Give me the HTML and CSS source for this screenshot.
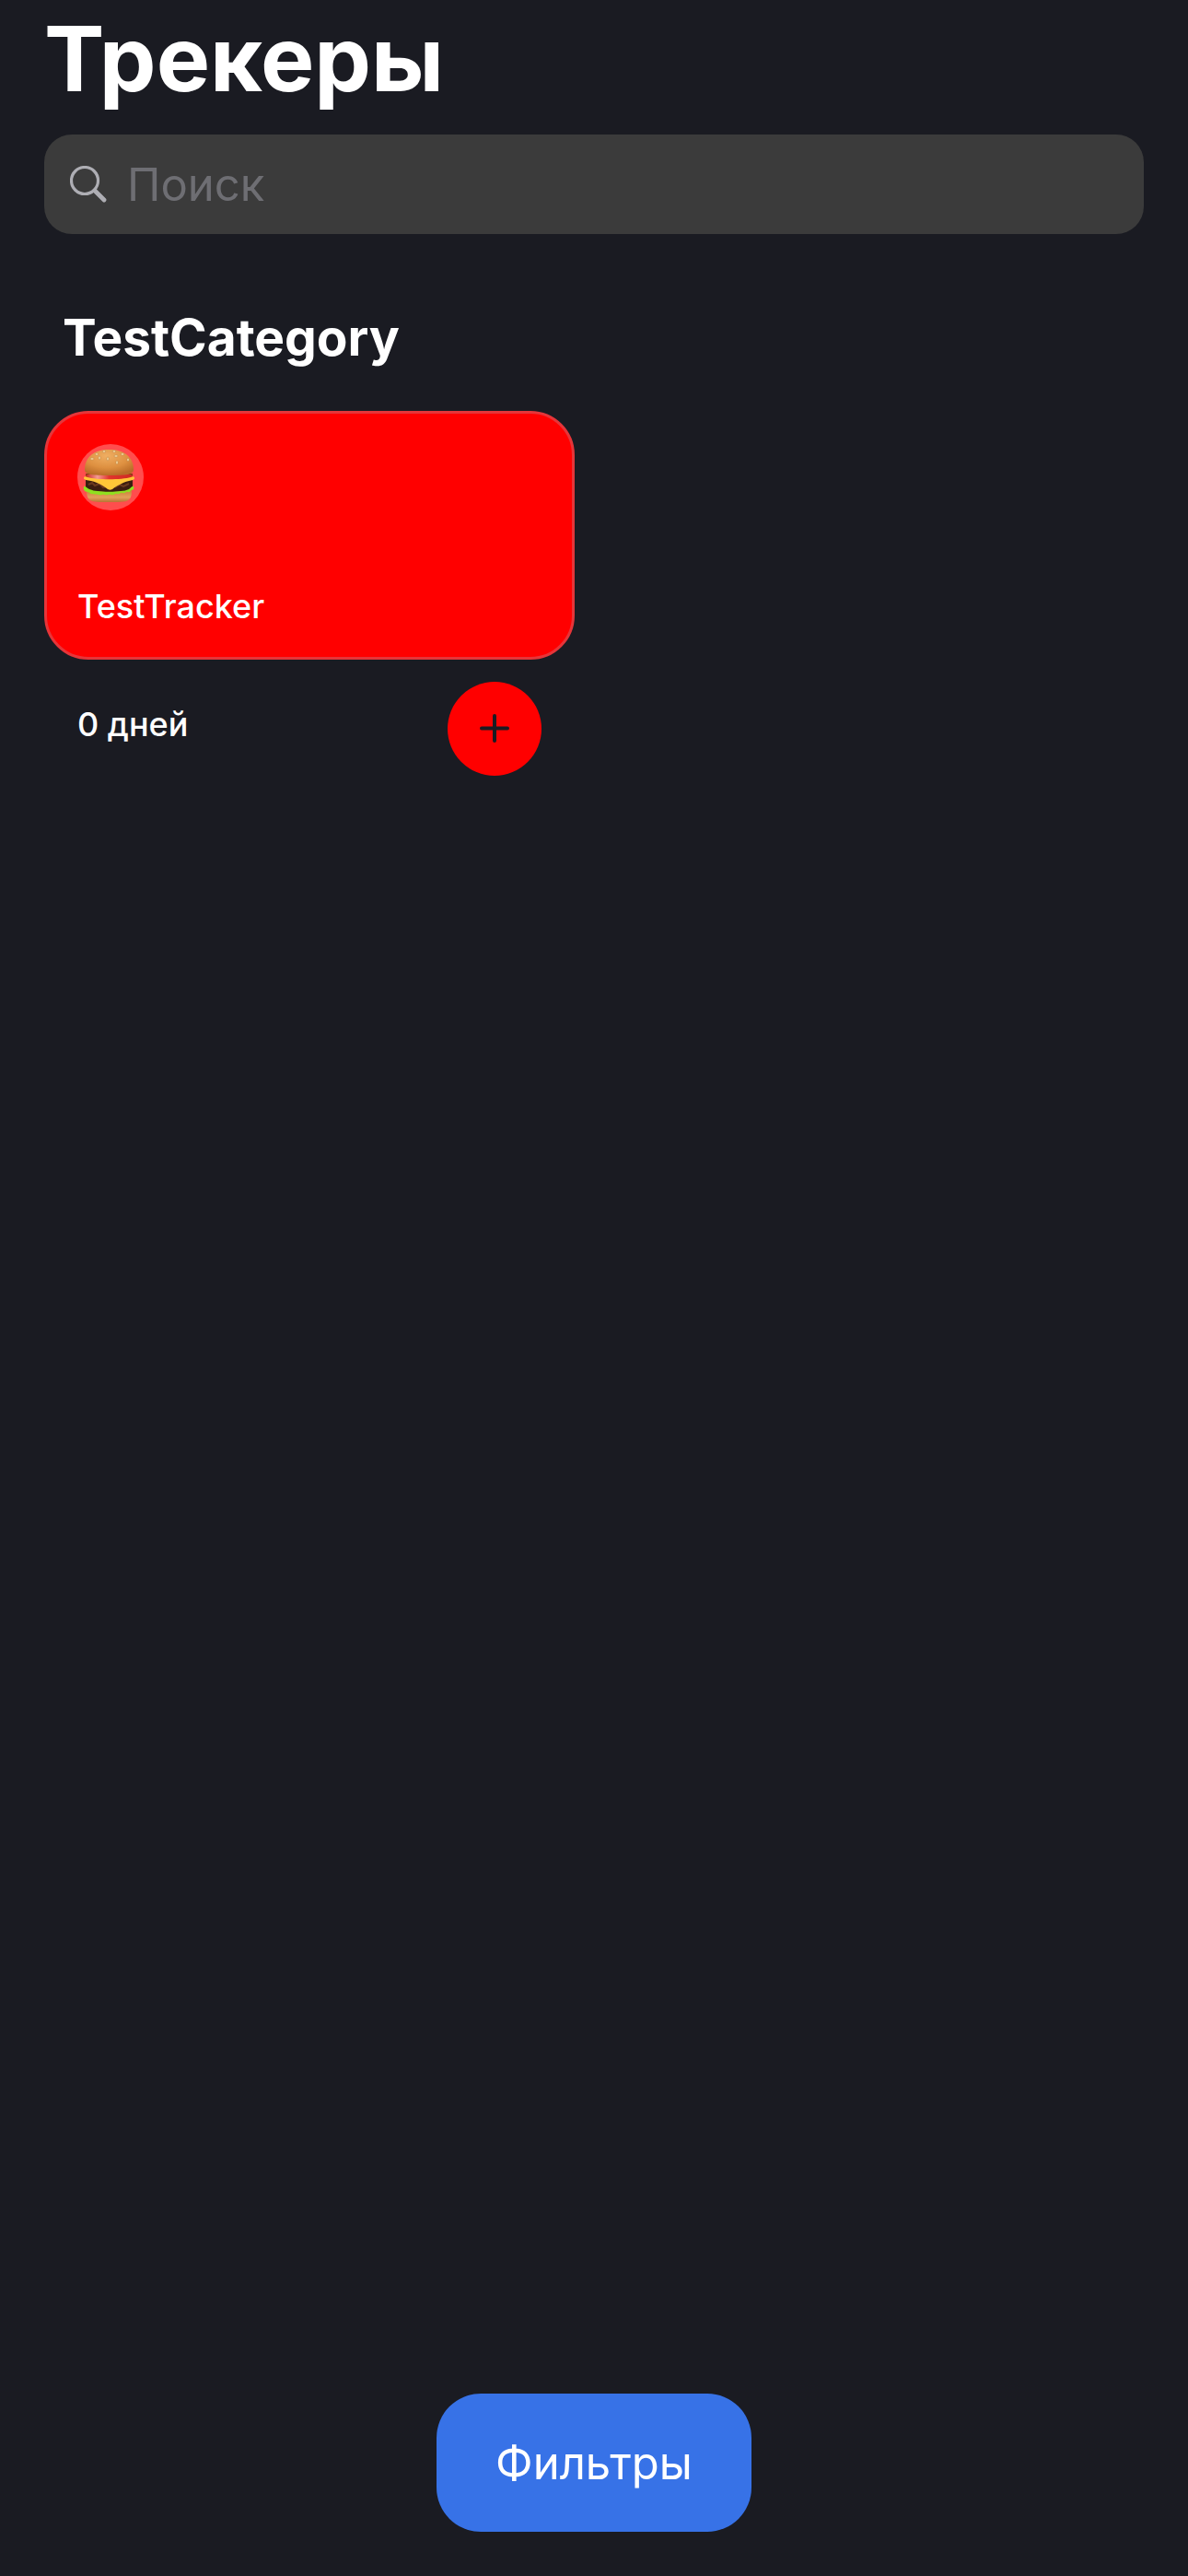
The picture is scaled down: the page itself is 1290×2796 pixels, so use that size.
FILE: index.html
```html
<!DOCTYPE html>
<html lang="ru">
<head>
  <meta charset="utf-8">
  <meta name="viewport" content="width=device-width, initial-scale=1">
  <title>Трекеры</title>
  <link rel="stylesheet" href="styles.css">
</head>
<body>
  <main class="screen">
    <h1 class="title">Трекеры</h1>

    <label class="search">
      <svg class="search-icon" viewBox="0 0 40 40" fill="none" stroke="currentColor" stroke-linecap="round" aria-hidden="true">
        <circle cx="16" cy="16" r="14.5" stroke-width="3.2"/>
        <path d="M27 27 37 37" stroke-width="4.8"/>
      </svg>
      <input class="search-input" type="search" placeholder="Поиск" aria-label="Поиск">
    </label>

    <section class="category">
      <h2 class="category-title">TestCategory</h2>
      <div class="tracker-grid">
        <article class="tracker">
          <div class="tracker-card">
            <span class="tracker-emoji">
              <svg viewBox="0 0 72 72" role="img" aria-label="Гамбургер">
                <defs>
                  <radialGradient id="bun" cx=".45" cy=".25" r=".75">
                    <stop offset="0" stop-color="#efae62"/>
                    <stop offset=".6" stop-color="#de9040"/>
                    <stop offset="1" stop-color="#b96c28"/>
                  </radialGradient>
                  <linearGradient id="heel" x1="0" y1="0" x2="0" y2="1">
                    <stop offset="0" stop-color="#c98038"/>
                    <stop offset=".6" stop-color="#e2a05a"/>
                    <stop offset="1" stop-color="#b87434"/>
                  </linearGradient>
                  <linearGradient id="tomato" x1="0" y1="0" x2="1" y2="0">
                    <stop offset="0" stop-color="#c9231c"/>
                    <stop offset=".25" stop-color="#f39a92"/>
                    <stop offset=".5" stop-color="#e0352c"/>
                    <stop offset="1" stop-color="#cf2a22"/>
                  </linearGradient>
                </defs>
                <path d="M10 50h49c0 6-1 9-4 11-3 2-11 2-20.500 2S17 63 14 61c-3-2-4-5-4-11z" fill="url(#heel)"/>
                <path d="M9 38h51v11c-8 4-43 4-51 0z" fill="#3b1d10"/>
                <path d="M12 44l4-2 3 3 5-2 4 4 5-1M41 47l5-3 4 2 6-3" fill="none" stroke="#6b3a20" stroke-width="2"/>
                <path d="M7 46c2-1 3 2 6 3 4 1 5 2 9 2 5 1 20 1 25 0 4 0 6-1 9-2 2-1 3-4 5-3 1 2 0 4-2 4-1 0-2 3-4 2-2-1-3 2-6 1-2-1-3 2-6 1-2-1-3 2-6 1-3-1-4 1-7 0-3-1-4 1-7 0-3-1-4 0-6-1-3 1-4-2-6-2-3 0-5-3-4-6z" fill="#8fe01f"/>
                <path d="M9 32h51v7H9z" fill="#8c3c16"/>
                <rect x="9" y="33" width="51" height="6" rx="3" fill="url(#tomato)"/>
                <path d="M7 37c0-2 2-2 4-1 10 3 37 3 47 0 2-1 4-1 4 1s-3 2-6 3c-8 2-14 6-18 9-2 1-3 1-5 0-5-4-10-7-18-9-4-1-8-1-8-3z" fill="#ffc638"/>
                <path d="M8 28C8 14 18 6 34.500 6S61 14 61 28c0 5-8 6-26.500 6S8 33 8 28z" fill="url(#bun)"/>
                <g fill="#f6d9a0" stroke="#b97b3a" stroke-width=".5">
                  <ellipse cx="21" cy="11" rx="1.800" ry="1.200"/>
                  <ellipse cx="29" cy="8" rx="1.800" ry="1.200"/>
                  <ellipse cx="40" cy="8" rx="1.800" ry="1.200"/>
                  <ellipse cx="49" cy="11" rx="1.800" ry="1.200"/>
                  <ellipse cx="33" cy="16" rx="1.200" ry="2"/>
                  <ellipse cx="24" cy="15" rx="1.200" ry="2"/>
                  <ellipse cx="43" cy="20" rx="1.200" ry="2"/>
                  <ellipse cx="42" cy="13" rx="2" ry="1.200"/>
                  <ellipse cx="16" cy="16" rx="2" ry="1.200"/>
                  <ellipse cx="55" cy="17" rx="1.200" ry="1.800"/>
                </g>
              </svg>
            </span>
            <h3 class="tracker-name">TestTracker</h3>
          </div>
          <div class="tracker-footer">
            <span class="tracker-days">0 дней</span>
            <button class="tracker-add" type="button" aria-label="Отметить выполнение">
              <svg viewBox="0 0 32 32" fill="none" stroke="currentColor" stroke-width="4" stroke-linecap="round" aria-hidden="true">
                <path d="M16 2v27M2 15.500h28"/>
              </svg>
            </button>
          </div>
        </article>
      </div>
    </section>

    <button class="filters" type="button">Фильтры</button>
  </main>
</body>
</html>
```

FILE: styles.css
```css
:root {
  --background: #1a1b22;
  --field: #3b3b3b;
  --placeholder: #6e6e73;
  --icon: #aeaeb4;
  --tracker: #ff0000;
  --blue: #3772e7;
}

* {
  box-sizing: border-box;
}

body {
  margin: 0;
  background: var(--background);
  color: #fff;
  font-family: Inter, "Liberation Sans", sans-serif;
}

h1,
h2,
h3 {
  margin: 0;
}

button {
  border: 0;
  padding: 0;
  font: inherit;
  cursor: pointer;
}

.screen {
  display: flex;
  flex-direction: column;
  min-height: 100vh;
  padding: 4px 48px 48px;
}

.title {
  font-size: 98px;
  line-height: 120px;
  font-weight: 700;
}

.search {
  display: flex;
  align-items: center;
  gap: 22px;
  height: 108px;
  margin-top: 22px;
  padding: 0 28px;
  border-radius: 30px;
  background: var(--field);
}

.search-icon {
  flex: none;
  width: 40px;
  height: 40px;
  color: var(--icon);
}

.search-input {
  flex: 1;
  min-width: 0;
  border: 0;
  padding: 2px 0 0;
  outline: 0;
  appearance: none;
  background: transparent;
  color: #fff;
  font: 400 49px/60px Inter, "Liberation Sans", sans-serif;
}

.search-input::placeholder {
  color: var(--placeholder);
  opacity: 1;
}

.category {
  margin-top: 78px;
}

.category-title {
  padding: 0 20px;
  font-size: 55px;
  line-height: 68px;
  font-weight: 700;
}

.tracker-grid {
  display: grid;
  grid-template-columns: 1fr 1fr;
  gap: 42px;
  margin-top: 46px;
}

.tracker-card {
  display: flex;
  flex-direction: column;
  align-items: flex-start;
  justify-content: space-between;
  min-height: 270px;
  padding: 33px;
  border: 3px solid #e63539;
  border-radius: 48px;
  background: var(--tracker);
}

.tracker-emoji {
  width: 72px;
  height: 72px;
  border-radius: 50%;
  background: rgba(255, 255, 255, 0.3);
}

.tracker-emoji svg {
  display: block;
}

.tracker-name,
.tracker-days {
  font-size: 36px;
  line-height: 44px;
  font-weight: 500;
}

.tracker-footer {
  display: flex;
  align-items: flex-start;
  justify-content: space-between;
  padding: 24px 36px;
}

.tracker-days {
  padding-top: 24px;
}

.tracker-add {
  display: grid;
  place-items: center;
  width: 102px;
  height: 102px;
  border-radius: 50%;
  background: var(--tracker);
  color: var(--background);
}

.tracker-add svg {
  width: 32px;
  height: 32px;
}

.filters {
  align-self: center;
  margin-top: auto;
  padding: 46px 64px 44px;
  border-radius: 48px;
  background: var(--blue);
  color: #fff;
  font-size: 49px;
  line-height: 60px;
}
```
